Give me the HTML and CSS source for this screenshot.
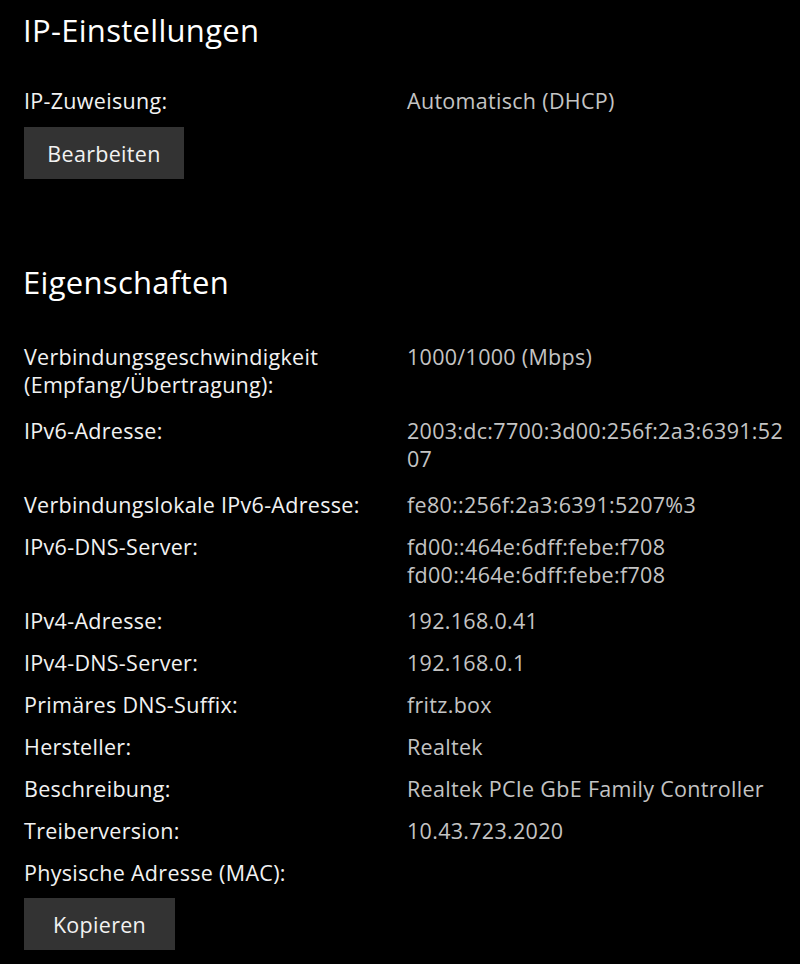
FILE: index.html
```html
<!DOCTYPE html>
<html lang="de">
<head>
<meta charset="utf-8">
<title>IP-Einstellungen</title>
<link rel="stylesheet" href="styles.css">
</head>
<body>
<main class="page">
  <h1 class="heading">IP-Einstellungen</h1>
  <div class="props">
    <div class="row">
      <div class="label">IP-Zuweisung:</div>
      <div class="value">Automatisch (DHCP)</div>
    </div>
  </div>
  <button class="btn btn-edit">Bearbeiten</button>

  <h2 class="heading heading-props">Eigenschaften</h2>
  <div class="props">
    <div class="row row-tall">
      <div class="label">Verbindungsgeschwindigkeit<br>(Empfang/Übertragung):</div>
      <div class="value">1000/1000 (Mbps)</div>
    </div>
    <div class="row row-tall">
      <div class="label">IPv6-Adresse:</div>
      <div class="value">2003:dc:7700:3d00:256f:2a3:6391:52<br>07</div>
    </div>
    <div class="row">
      <div class="label">Verbindungslokale IPv6-Adresse:</div>
      <div class="value">fe80::256f:2a3:6391:5207%3</div>
    </div>
    <div class="row row-tall">
      <div class="label">IPv6-DNS-Server:</div>
      <div class="value">fd00::464e:6dff:febe:f708<br>fd00::464e:6dff:febe:f708</div>
    </div>
    <div class="row">
      <div class="label">IPv4-Adresse:</div>
      <div class="value">192.168.0.41</div>
    </div>
    <div class="row">
      <div class="label">IPv4-DNS-Server:</div>
      <div class="value">192.168.0.1</div>
    </div>
    <div class="row">
      <div class="label">Primäres DNS-Suffix:</div>
      <div class="value">fritz.box</div>
    </div>
    <div class="row">
      <div class="label">Hersteller:</div>
      <div class="value">Realtek</div>
    </div>
    <div class="row">
      <div class="label">Beschreibung:</div>
      <div class="value">Realtek PCIe GbE Family Controller</div>
    </div>
    <div class="row">
      <div class="label">Treiberversion:</div>
      <div class="value">10.43.723.2020</div>
    </div>
    <div class="row">
      <div class="label">Physische Adresse (MAC):</div>
      <div class="value"></div>
    </div>
  </div>
  <button class="btn btn-copy">Kopieren</button>
</main>
</body>
</html>
```

FILE: styles.css
```css
html, body {
  margin: 0;
  padding: 0;
  background: #000;
}

body {
  font-family: "Open Sans", "Noto Sans", sans-serif;
  color: #f2f2f2;
}

.page {
  padding: 10px 24px 0 24px;
  display: flex;
  flex-direction: column;
  align-items: flex-start;
}

.heading {
  margin: 0;
  font-size: 31px;
  line-height: 40px;
  font-weight: 400;
  letter-spacing: 0.3px;
  color: #fff;
  margin-left: -1px;
}

.heading-props {
  margin-top: 83px;
}

.props {
  display: flex;
  flex-direction: column;
  gap: 14px;
  margin-top: 37px;
  align-self: stretch;
}

.heading-props + .props {
  margin-top: 41px;
}

.row {
  display: grid;
  grid-template-columns: 383px 1fr;
  font-size: 21.5px;
  line-height: 28px;
  letter-spacing: 0.3px;
}

.row-tall {
  padding-bottom: 4px;
}

.label {
  color: #f2f2f2;
}

.value {
  color: #c4c4c4;
}

.btn {
  margin-top: 12px;
  height: 52px;
  border: none;
  background: #333;
  color: #f2f2f2;
  font-family: inherit;
  font-size: 21.5px;
  letter-spacing: 0.3px;
  padding: 0;
}

.btn-edit {
  width: 160px;
}

.btn-copy {
  margin-top: 11px;
  width: 151px;
}
```
